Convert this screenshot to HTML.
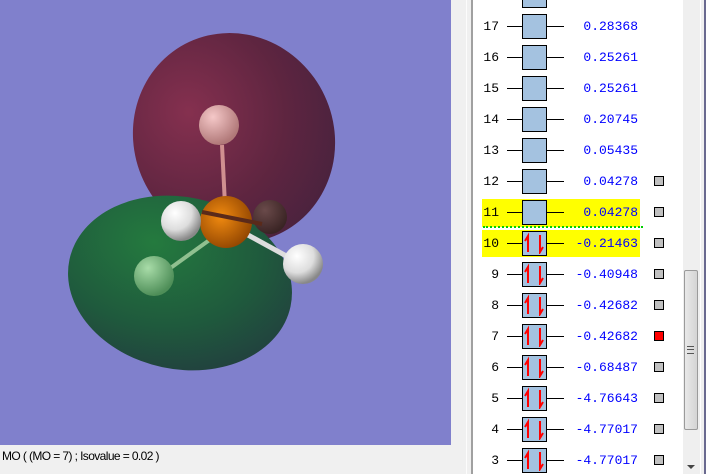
<!DOCTYPE html>
<html><head><meta charset="utf-8"><style>
*{margin:0;padding:0;box-sizing:border-box}
body{width:706px;height:474px;overflow:hidden;background:#f0f0f0;position:relative;font-family:"Liberation Sans",sans-serif}
.vp{position:absolute;left:0;top:0;width:451px;height:445px;background:#8080cc;overflow:hidden}
.status{position:absolute;left:2px;top:449px;font-size:12px;color:#000;letter-spacing:-0.6px}
.list{position:absolute;left:473px;top:0;width:210px;height:474px;background:#fff;overflow:hidden}
.r{position:absolute;left:0;width:210px;height:31px;font-family:"Liberation Mono",monospace;font-size:13px}
.n{position:absolute;right:184px;top:8px;color:#000}
.ln{position:absolute;left:34px;width:57px;top:15px;height:1px;background:#000}
.bx{position:absolute;left:49px;top:3px;width:25px;height:25px;border:1.5px solid #000;background:#a4c2e0}
.v{position:absolute;right:45px;top:8px;color:#0000ff}
.sq{position:absolute;left:181px;top:10px;width:10px;height:10px;border:1px solid #000;background:#c0c0c0}
.hl{position:absolute;left:9px;width:158px;background:#ffff00}
</style></head><body>
<div class="vp">
<svg width="451" height="445">
<defs>
<radialGradient id="rg" cx="0.35" cy="0.3" r="0.8"><stop offset="0" stop-color="#85304f"/><stop offset="0.6" stop-color="#5e2540"/><stop offset="1" stop-color="#48223e"/></radialGradient>
<radialGradient id="gg" cx="0.35" cy="0.3" r="0.8"><stop offset="0" stop-color="#247a3e"/><stop offset="0.6" stop-color="#1f5a3d"/><stop offset="1" stop-color="#223e3e"/></radialGradient>
<radialGradient id="wh" cx="0.35" cy="0.3" r="0.7"><stop offset="0" stop-color="#fff"/><stop offset="0.6" stop-color="#ddd"/><stop offset="1" stop-color="#888"/></radialGradient>
<radialGradient id="pk" cx="0.35" cy="0.3" r="0.7"><stop offset="0" stop-color="#f5c8c8"/><stop offset="1" stop-color="#b07878"/></radialGradient>
<radialGradient id="gn" cx="0.35" cy="0.3" r="0.7"><stop offset="0" stop-color="#a8dca8"/><stop offset="1" stop-color="#4e8e58"/></radialGradient>
<radialGradient id="or" cx="0.4" cy="0.4" r="0.7"><stop offset="0" stop-color="#f08a10"/><stop offset="1" stop-color="#8a4000"/></radialGradient>
<radialGradient id="br" cx="0.35" cy="0.3" r="0.7"><stop offset="0" stop-color="#6a4a4a"/><stop offset="1" stop-color="#3a2424"/></radialGradient>
</defs>
<ellipse cx="234" cy="138" rx="100" ry="106" transform="rotate(-25 234 138)" fill="url(#rg)"/>
<ellipse cx="180" cy="283" rx="113" ry="86" transform="rotate(12 180 283)" fill="url(#gg)"/>
<line x1="222" y1="145" x2="225" y2="205" stroke="#d09090" stroke-width="4"/>
<line x1="215" y1="236" x2="165" y2="272" stroke="#90c090" stroke-width="4"/>
<line x1="248" y1="235" x2="290" y2="258" stroke="#ddd" stroke-width="5"/>
<circle cx="219" cy="125" r="20" fill="url(#pk)"/>
<circle cx="270" cy="217" r="17" fill="url(#br)"/>
<circle cx="226" cy="222" r="26" fill="url(#or)"/>
<line x1="202" y1="212" x2="262" y2="224" stroke="#5a2a1a" stroke-width="4"/>
<circle cx="181" cy="221" r="20" fill="url(#wh)"/>
<circle cx="154" cy="276" r="20" fill="url(#gn)"/>
<circle cx="303" cy="264" r="20" fill="url(#wh)"/>
</svg>
</div>
<div class="status">MO ( (MO = 7) ; Isovalue = 0.02 )</div>
<div style="position:absolute;left:466px;top:0;width:1px;height:474px;background:#fcfcfc"></div>
<div style="position:absolute;left:471px;top:0;width:2px;height:474px;background:#a0a0a0"></div>
<div class="list">
<div class="hl" style="top:199px;height:28px"></div>
<div class="hl" style="top:230px;height:27px"></div>
<div style="position:absolute;left:10px;top:226px;width:160px;border-top:2px dotted #00d000"></div>
<div class="r" style="top:-20px"><div class="ln"></div><div class="bx"></div></div>
<div class="r" style="top:11px"><span class="n">17</span><div class="ln"></div><div class="bx"></div><span class="v">0.28368</span></div>
<div class="r" style="top:42px"><span class="n">16</span><div class="ln"></div><div class="bx"></div><span class="v">0.25261</span></div>
<div class="r" style="top:73px"><span class="n">15</span><div class="ln"></div><div class="bx"></div><span class="v">0.25261</span></div>
<div class="r" style="top:104px"><span class="n">14</span><div class="ln"></div><div class="bx"></div><span class="v">0.20745</span></div>
<div class="r" style="top:135px"><span class="n">13</span><div class="ln"></div><div class="bx"></div><span class="v">0.05435</span></div>
<div class="r" style="top:166px"><span class="n">12</span><div class="ln"></div><div class="bx"></div><span class="v">0.04278</span><div class="sq"></div></div>
<div class="r" style="top:197px"><span class="n">11</span><div class="ln"></div><div class="bx"></div><span class="v">0.04278</span><div class="sq"></div></div>
<div class="r" style="top:228px"><span class="n">10</span><div class="ln"></div><div class="bx"><svg width="22" height="22" style="position:absolute;left:0;top:0"><path d="M5 20V4L2 9M17 3V20L20 15" stroke="#f00" stroke-width="2" fill="none"/></svg></div><span class="v">-0.21463</span><div class="sq"></div></div>
<div class="r" style="top:259px"><span class="n">9</span><div class="ln"></div><div class="bx"><svg width="22" height="22" style="position:absolute;left:0;top:0"><path d="M5 20V4L2 9M17 3V20L20 15" stroke="#f00" stroke-width="2" fill="none"/></svg></div><span class="v">-0.40948</span><div class="sq"></div></div>
<div class="r" style="top:290px"><span class="n">8</span><div class="ln"></div><div class="bx"><svg width="22" height="22" style="position:absolute;left:0;top:0"><path d="M5 20V4L2 9M17 3V20L20 15" stroke="#f00" stroke-width="2" fill="none"/></svg></div><span class="v">-0.42682</span><div class="sq"></div></div>
<div class="r" style="top:321px"><span class="n">7</span><div class="ln"></div><div class="bx"><svg width="22" height="22" style="position:absolute;left:0;top:0"><path d="M5 20V4L2 9M17 3V20L20 15" stroke="#f00" stroke-width="2" fill="none"/></svg></div><span class="v">-0.42682</span><div class="sq" style="background:#f00"></div></div>
<div class="r" style="top:352px"><span class="n">6</span><div class="ln"></div><div class="bx"><svg width="22" height="22" style="position:absolute;left:0;top:0"><path d="M5 20V4L2 9M17 3V20L20 15" stroke="#f00" stroke-width="2" fill="none"/></svg></div><span class="v">-0.68487</span><div class="sq"></div></div>
<div class="r" style="top:383px"><span class="n">5</span><div class="ln"></div><div class="bx"><svg width="22" height="22" style="position:absolute;left:0;top:0"><path d="M5 20V4L2 9M17 3V20L20 15" stroke="#f00" stroke-width="2" fill="none"/></svg></div><span class="v">-4.76643</span><div class="sq"></div></div>
<div class="r" style="top:414px"><span class="n">4</span><div class="ln"></div><div class="bx"><svg width="22" height="22" style="position:absolute;left:0;top:0"><path d="M5 20V4L2 9M17 3V20L20 15" stroke="#f00" stroke-width="2" fill="none"/></svg></div><span class="v">-4.77017</span><div class="sq"></div></div>
<div class="r" style="top:445px"><span class="n">3</span><div class="ln"></div><div class="bx"><svg width="22" height="22" style="position:absolute;left:0;top:0"><path d="M5 20V4L2 9M17 3V20L20 15" stroke="#f00" stroke-width="2" fill="none"/></svg></div><span class="v">-4.77017</span><div class="sq"></div></div>
</div>
<div style="position:absolute;left:683px;top:0;width:17px;height:474px;background:#efefef"></div>
<div style="position:absolute;left:684px;top:270px;width:14px;height:160px;background:linear-gradient(90deg,#e8e8e8,#d4d4d4);border:1px solid #9a9a9a;border-radius:2px"></div>
<div style="position:absolute;left:687px;top:346px;width:7px;height:8px;border-top:1px solid #555;border-bottom:1px solid #555"><div style="margin-top:2px;height:1px;background:#555"></div></div>
<div style="position:absolute;left:687px;top:465px;width:0;height:0;border-left:4px solid transparent;border-right:4px solid transparent;border-top:4px solid #444"></div>
<div style="position:absolute;left:700px;top:0;width:1px;height:474px;background:#fff"></div>
<div style="position:absolute;left:704px;top:0;width:2px;height:474px;background:#6a6a90"></div>
</body></html>
